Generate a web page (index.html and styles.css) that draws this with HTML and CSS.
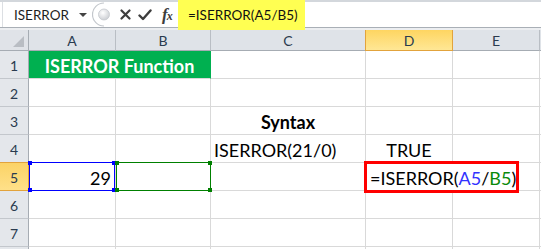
FILE: index.html
```html
<!DOCTYPE html>
<html>
<head>
<meta charset="utf-8">
<link rel="stylesheet" href="styles.css">
</head>
<body>
<div class="app">
  <div class="fbar">
    <div class="namebox"><span class="nb-text">ISERROR</span><span class="dd"></span></div>
    <svg class="grip" width="20" height="25" viewBox="0 0 20 25">
      <defs>
        <radialGradient id="g1" cx="0.4" cy="0.35" r="0.7">
          <stop offset="0" stop-color="#ffffff"/>
          <stop offset="1" stop-color="#c9ccd1"/>
        </radialGradient>
      </defs>
      <path d="M12 1 A11 11 0 0 0 12 24" fill="none" stroke="#c3c7cc" stroke-width="1.2"/>
      <circle cx="12" cy="12.5" r="5.5" fill="url(#g1)" stroke="#c5c9ce" stroke-width="0.8"/>
    </svg>
    <div class="icons">
      <svg class="ic-x" width="11" height="11" viewBox="0 0 11 11"><path d="M1.5 1.5 L9.5 9.5 M9.5 1.5 L1.5 9.5" stroke="#3d3d3d" stroke-width="2.2" stroke-linecap="round"/></svg>
      <svg class="ic-check" width="14" height="12" viewBox="0 0 14 12"><path d="M1.5 6.5 L5 10 L12.5 1.5" fill="none" stroke="#3d3d3d" stroke-width="2.4" stroke-linejoin="round" stroke-linecap="round"/></svg>
      <span class="fx"><span class="fx-f">f</span><span class="fx-x">x</span></span>
    </div>
    <div class="formula"><span class="hl">=ISERROR(A5/B5)</span></div>
  </div>

  <div class="sheet">
    <div class="corner"><svg width="11" height="11" viewBox="0 0 11 11"><path d="M11 0 L11 11 L0 11 Z" fill="#b9bdc3"/></svg></div>
    <div class="ch">A</div>
    <div class="ch">B</div>
    <div class="ch">C</div>
    <div class="ch ch-sel">D</div>
    <div class="ch">E</div>
    <div class="ch ch-rest"></div>

    <div class="rh">1</div>
    <div class="c title">ISERROR Function</div>
    <div class="c"></div>
    <div class="c"></div>
    <div class="c"></div>
    <div class="c rest"></div>

    <div class="rh">2</div>
    <div class="c"></div><div class="c"></div><div class="c"></div><div class="c"></div><div class="c"></div><div class="c rest"></div>

    <div class="rh">3</div>
    <div class="c"></div><div class="c"></div>
    <div class="c center bold">Syntax</div>
    <div class="c"></div><div class="c"></div><div class="c rest"></div>

    <div class="rh">4</div>
    <div class="c"></div><div class="c"></div>
    <div class="c left">ISERROR(21/0)</div>
    <div class="c center">TRUE</div>
    <div class="c"></div><div class="c rest"></div>

    <div class="rh rh-sel">5</div>
    <div class="c right ref-cell">29<span class="ref ref-blue"><i class="h tl"></i><i class="h tr"></i><i class="h bl"></i><i class="h br"></i></span></div>
    <div class="c ref-cell"><span class="ref ref-green"><i class="h tl"></i><i class="h tr"></i><i class="h bl"></i><i class="h br"></i></span></div>
    <div class="c"></div>
    <div class="c left d5"><span class="redbox"></span><span class="ftxt">=ISERROR(<span class="cb">A5</span>/<span class="cg">B5</span>)</span></div>
    <div class="c rest"></div>

    <div class="rh">6</div>
    <div class="c"></div><div class="c"></div><div class="c"></div><div class="c"></div><div class="c"></div><div class="c rest"></div>

    <div class="rh">7</div>
    <div class="c"></div><div class="c"></div><div class="c"></div><div class="c"></div><div class="c"></div><div class="c rest"></div>

    <div class="rh"></div>
    <div class="c"></div><div class="c"></div><div class="c"></div><div class="c"></div><div class="c"></div><div class="c rest"></div>
  </div>
</div>
</body>
</html>
```

FILE: styles.css
```css
* { box-sizing: border-box; }
html, body { margin: 0; padding: 0; }
body {
  width: 541px;
  height: 249px;
  overflow: hidden;
  background: #ffffff;
  font-family: Lato, "Open Sans", sans-serif;
}
.app { width: 541px; height: 249px; overflow: hidden; }

/* formula bar */
.fbar {
  height: 28px;
  display: flex;
  align-items: stretch;
  border-top: 2px solid #d3d7dc;
  border-bottom: 1px solid #a9afb6;
  background: #ffffff;
}
.namebox {
  width: 90px;
  margin-left: 2px;
  padding-left: 11px;
  display: flex;
  align-items: center;
  border-left: 1px solid #dcdfe3;
  font-size: 13.5px;
  color: #1e1e1e;
}
.nb-text { flex: 1; }
.dd {
  width: 0; height: 0;
  border-left: 4px solid transparent;
  border-right: 4px solid transparent;
  border-top: 4px solid #444;
  margin-right: 5px;
}
.grip { display: block; margin-top: 0; }
.icons {
  width: 66px;
  display: flex;
  align-items: center;
  padding-left: 8px;
  gap: 6px;
}
.ic-check { margin-left: 1px; }
.fx {
  font-family: "Liberation Serif", serif;
  font-style: italic;
  color: #3d3d3d;
  margin-left: 4px;
  display: flex;
  align-items: baseline;
}
.fx-f { font-size: 17px; font-weight: bold; }
.fx-x { font-size: 12px; margin-left: -1px; font-weight: bold; }
.formula { flex: 1; display: flex; }
.hl {
  background: #ffff52;
  margin: -2px 0 -2px 0;
  padding: 0 7px 0 10px;
  display: flex;
  align-items: center;
  font-size: 13.5px;
  color: #111;
  height: 30px;
}

/* sheet grid */
.sheet {
  display: grid;
  grid-template-columns: 29px 87px 95px 155px 87px 87px 1fr;
  grid-template-rows: 21px repeat(7, 28px) 1fr;
  border-top: 2px solid #eceef1;
  height: 220px;
}
.corner {
  background: #e0e3e8;
  border-right: 1px solid #a6acb3;
  border-bottom: 1px solid #a6acb3;
  display: flex;
  align-items: flex-end;
  justify-content: flex-end;
  padding: 0 4px 3px 0;
}
.corner svg { display: block; }
.ch {
  background: #dfe3e8;
  border-right: 1px solid #b9bec4;
  border-bottom: 1px solid #a6acb3;
  display: flex;
  align-items: center;
  justify-content: center;
  font-size: 14px;
  color: #2a3b4f;
  padding-top: 1px;
}
.ch-rest { border-right: none; }
.ch-sel {
  background: linear-gradient(#fed561, #ffe795);
  border-right: 1px solid #e2a33c;
  border-left: 1px solid #e2a33c;
  border-bottom: 1px solid #e2a33c;
  margin-left: -1px;
}
.rh {
  background: #e4e7eb;
  border-right: 1px solid #a6acb3;
  border-bottom: 1px solid #c3c7cc;
  display: flex;
  align-items: center;
  justify-content: center;
  font-size: 14px;
  color: #2a3b4f;
  padding-top: 2px;
}
.rh-sel {
  background: linear-gradient(#fbd366, #ffe089);
  border-right: 1px solid #e2a33c;
  border-bottom: 1px solid #e2a33c;
  border-top: 1px solid #e2a33c;
  margin-top: -1px;
}
.c {
  border-right: 1px solid #d9d9d9;
  border-bottom: 1px solid #d9d9d9;
  display: flex;
  align-items: center;
  font-size: 18px;
  color: #000;
  white-space: nowrap;
  padding-top: 2px;
}
.rest { border-right: none; }
.left { padding-left: 3px; }
.right { justify-content: flex-end; padding-right: 4px; }
.center { justify-content: center; }
.bold { font-weight: bold; }
.title {
  grid-column: span 2;
  background: #00b050;
  color: #ffffff;
  font-weight: bold;
  justify-content: center;
  border-right: 1px solid #00b050;
  border-bottom: 1px solid #d9d9d9;
}

/* reference highlight boxes */
.ref-cell { position: relative; }
.ref {
  position: absolute;
  top: -1px;
  left: 0;
  right: -1px;
  bottom: -1px;
  border: 1px solid;
  pointer-events: none;
}
.ref-blue { border-color: #0000ff; left: 0; right: 0; }
.ref-green { border-color: #008000; left: 0; }
.h {
  position: absolute;
  width: 4px;
  height: 4px;
}
.ref-blue .h { background: #0000ff; }
.ref-green .h { background: #008000; }
.h.tl { top: -2px; left: -2px; }
.h.tr { top: -2px; right: -2px; }
.h.bl { bottom: -2px; left: -2px; }
.h.br { bottom: -2px; right: -2px; }

.d5 {
  grid-column: span 2;
  position: relative;
  padding-left: 4px;
}
.redbox {
  position: absolute;
  top: -2px;
  left: -2px;
  width: 155px;
  height: 32px;
  border: 3px solid #ff0000;
}
.ftxt { position: relative; }
.cb { color: #3232ff; }
.cg { color: #0a8a0a; }
```
